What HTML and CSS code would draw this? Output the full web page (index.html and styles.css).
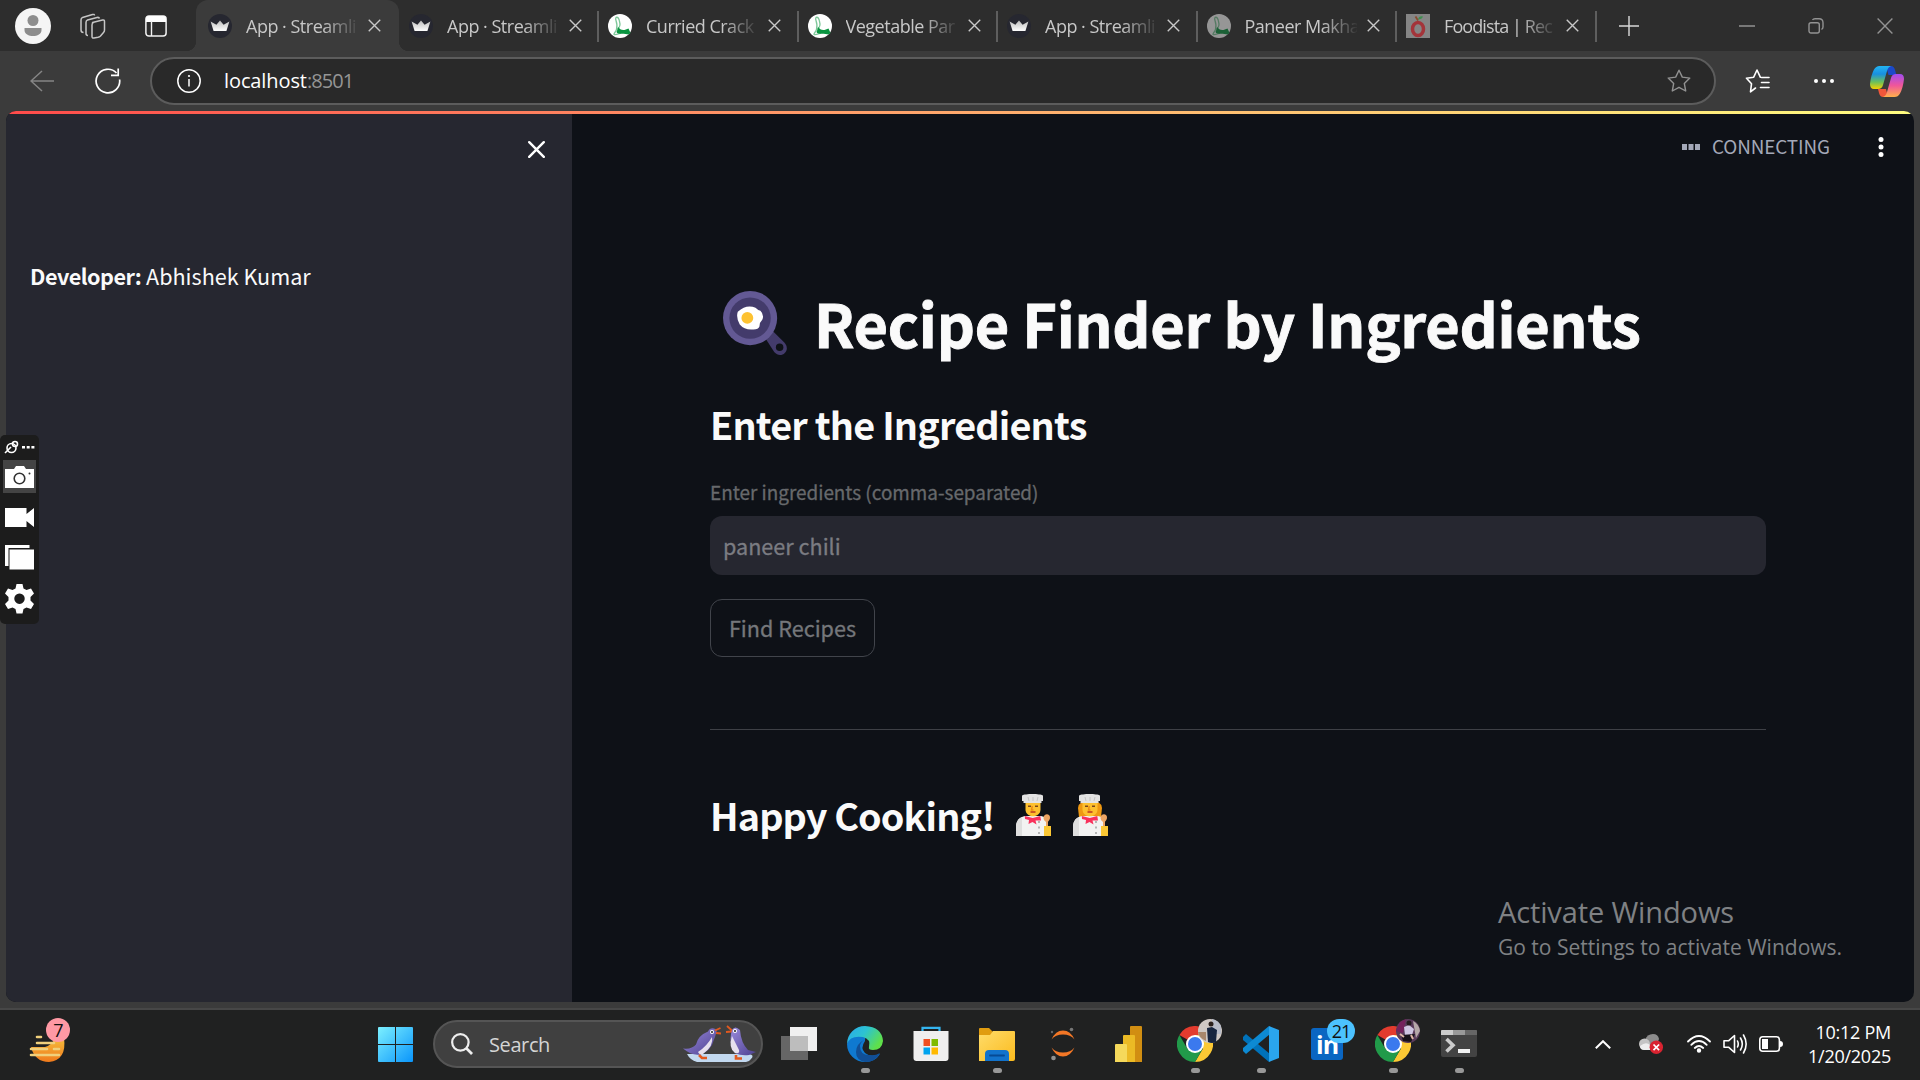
FILE: index.html
```html
<!DOCTYPE html>
<html lang="en">
<head>
<meta charset="utf-8">
<title>App · Streamlit</title>
<link rel="stylesheet" href="styles.css">
</head>
<body>
<svg class="defs" width="0" height="0">
  <defs>
    <linearGradient id="g-crown" x1="0" y1="0" x2="0" y2="1"><stop offset="0" stop-color="#bbb"/><stop offset="1" stop-color="#fff"/></linearGradient>
    <linearGradient id="g-edge1" x1="0" y1="0" x2="1" y2="0.5"><stop offset="0" stop-color="#2aa8ee"/><stop offset=".5" stop-color="#2cc3d2"/><stop offset="1" stop-color="#5fe04a"/></linearGradient>
    <linearGradient id="g-cop1" x1="0" y1="0" x2="0" y2="1"><stop offset="0" stop-color="#23b5f3"/><stop offset=".35" stop-color="#188fe0"/><stop offset=".7" stop-color="#6cc05a"/><stop offset="1" stop-color="#f5d000"/></linearGradient>
    <linearGradient id="g-cop2" x1="0" y1="0" x2="0" y2="1"><stop offset="0" stop-color="#a04cf0"/><stop offset=".5" stop-color="#f0569a"/><stop offset="1" stop-color="#ffb04a"/></linearGradient>
    <linearGradient id="g-win" x1="0" y1="0" x2="1" y2="1"><stop offset="0" stop-color="#7cf0ff"/><stop offset="1" stop-color="#0a95fb"/></linearGradient>
    <linearGradient id="g-folder" x1="0" y1="0" x2="1" y2="1"><stop offset="0" stop-color="#ffdc6a"/><stop offset="1" stop-color="#fbbb1e"/></linearGradient>
    <linearGradient id="g-peng" x1="0" y1="0" x2="1" y2="1"><stop offset="0" stop-color="#9a8add"/><stop offset="1" stop-color="#4d4190"/></linearGradient>
    <linearGradient id="g-sun" x1="0" y1="0" x2="0" y2="1"><stop offset="0" stop-color="#f5bd3c"/><stop offset="1" stop-color="#f07a1c"/></linearGradient>
  </defs>
  <symbol id="i-close" viewBox="0 0 14 14"><path d="M.8.8l12.4 12.4M13.2.8L.8 13.2" fill="none" stroke="currentColor" stroke-width="1.500"/></symbol>
  <symbol id="i-crown" viewBox="0 0 24 24"><circle cx="12" cy="12" r="12" fill="#262730"/><path d="M2.600 7.600l5.800 3.200L12 6.400l3.600 4.400 5.800-3.200-3 9.400H5.600z" fill="url(#g-crown)"/></symbol>
  <symbol id="i-bottle" viewBox="0 0 24 24"><circle cx="12" cy="12" r="12" fill="#fff"/><path d="M9 15.500c3-2 3.500-5 2.500-8-1-6-5-5-3.500-1 1 3 1.500 6 .5 9-1 3-3 4-2.500 5 2 1 5-1 7-1.500" fill="none" stroke="#7fc79a" stroke-width="1.300"/><path d="M10.500 13c1 2 3 3.500 6 3l4-1.500 2 4.500-2 1.500c-3-1-11 .5-12-2.500z" fill="#0a9440"/></symbol>
  <symbol id="i-chrome" viewBox="0 0 36 36"><path d="M18 18L2.400 9A18 18 0 0 1 33.600 9H18z" fill="#e33b2e"/><path d="M18 18V9h15.600A18 18 0 0 1 18 36l8-13.500z" fill="#fcc934"/><path d="M10.200 22.500L2.400 9A18 18 0 0 0 18 36l7.800-13.500z" fill="#219a4a"/><circle cx="18" cy="18" r="9" fill="#fff"/><circle cx="18" cy="18" r="7" fill="#3b79ee"/></symbol>
  <symbol id="i-chef" viewBox="0 0 35 42"><path d="M0 42v-9c0-7 4-10 9-11h16c5 1 7 4 7 8v12z" fill="#f2f2f2"/><path d="M0 42v-9c0-5 2-8 6-10v19z" fill="#dedede"/><path d="M28 32h7v10h-7z" fill="#fbc734"/><path d="M27.500 24c0-5 7-5 6.500 0 0 2-2 3-2 4v4h-2v-4c-1-1-2.500-2-2.500-4z" fill="#eda564"/><path d="M8.800 22l8 2 7.500-2 .7 4.500-5.500 0 1 4-4-2.500-4 2 .5-4-4-1z" fill="#f9315c"/><path d="M9.500 8.500h15v7c0 9-15 9-15 0z" fill="#fdc02f"/><path d="M12 12.200h3M19 12.200h3" stroke="#7a461c" stroke-width="1.500"/><path d="M14.500 18h5" stroke="#b9351f" stroke-width="1.500"/><path d="M16.300 12l-.8 4h2" stroke="#ec8a14" stroke-width="1.400" fill="none"/><path d="M6 1.500c3-2 18-2 21 0v5.500h-1.500v2h-18v-2H6z" fill="#e3e3e3"/><path d="M12 3l1 4M17 3v4M22 3l-1 4" stroke="#c5c5c5" stroke-width="1"/><path d="M22 28h2M22 33.500h2M22 39h2" stroke="#b5b5b5" stroke-width="2"/></symbol>
</svg>

<div class="tabstrip">
  <svg class="avatar" viewBox="0 0 36 36"><circle cx="18" cy="18" r="18" fill="#f5f5f5"/><circle cx="18" cy="12.500" r="5.500" fill="#8d8d8d"/><path d="M9.500 20h17v2c0 8-17 8-17 0z" fill="#8d8d8d"/></svg>
  <svg class="workspaces" viewBox="0 0 26 26" fill="none" stroke="#c6c6c6" stroke-width="1.500" stroke-linejoin="round"><path d="M12.500 9.500l10-2.500q2-.5 2 1.500v8.500q0 1.500-1 2.500l-3 3.500q-1 1-2.500 1.300l-4 .7q-2 .3-2-1.500V12q0-2 1.500-2.500zM8 22.500q-2 0-2-2V9.500q0-2 1.500-2.500l9.500-2.500q2-.5 2.500 1M3.500 19.500q-2.500 0-2.500-2.500V7q0-2 1.500-2.500L12.500 1.500q2-.5 2 1"/></svg>
  <svg class="vtabs" viewBox="0 0 22 22"><rect x=".9" y=".9" width="20.200" height="20.200" rx="3" fill="none" stroke="#f2f2f2" stroke-width="1.500"/><path d="M1 4q0-3 3-3h14q3 0 3 3v3H1z" fill="#fff"/><path d="M6.500 6v15" stroke="#f2f2f2" stroke-width="1.400"/></svg>
  <div class="tabs">
    <div class="tab active"><svg class="fav"><use href="#i-crown"/></svg><span class="tt">App · Streamli</span><svg class="x"><use href="#i-close"/></svg></div>
    <div class="tab sep"><svg class="fav"><use href="#i-crown"/></svg><span class="tt">App · Streamli</span><svg class="x"><use href="#i-close"/></svg></div>
    <div class="tab sep"><svg class="fav"><use href="#i-bottle"/></svg><span class="tt">Curried Crack</span><svg class="x"><use href="#i-close"/></svg></div>
    <div class="tab sep"><svg class="fav"><use href="#i-bottle"/></svg><span class="tt">Vegetable Par</span><svg class="x"><use href="#i-close"/></svg></div>
    <div class="tab sep"><svg class="fav"><use href="#i-crown"/></svg><span class="tt">App · Streamli</span><svg class="x"><use href="#i-close"/></svg></div>
    <div class="tab sep"><svg class="fav dim"><use href="#i-bottle"/></svg><span class="tt">Paneer Makha</span><svg class="x"><use href="#i-close"/></svg></div>
    <div class="tab sep"><svg class="fav" viewBox="0 0 24 24"><path d="M0 0h24v24H0z" fill="#858585"/><ellipse cx="12" cy="15" rx="5.500" ry="6.500" fill="none" stroke="#a3343a" stroke-width="3.500"/><path d="M12 6.500L9.500 2.500" stroke="#8a4a2a" stroke-width="1.800"/><path d="M12 5.500q1-4 5-3-1 3-5 3z" fill="#3f8f4f"/></svg><span class="tt tight">Foodista | Rec</span><svg class="x"><use href="#i-close"/></svg></div>
  </div>
  <svg class="plus" viewBox="0 0 21 21"><path d="M10.500 0v21M0 10.500h21" stroke="#d8d8d8" stroke-width="1.500"/></svg>
  <div class="winctl">
    <svg viewBox="0 0 16 16"><path d="M0 8h16" stroke="#929292" stroke-width="1.500"/></svg>
    <svg viewBox="0 0 16 16" fill="none" stroke="#929292" stroke-width="1.400"><rect x="1" y="4.700" width="10.300" height="10.300" rx="2"/><path d="M4.500 2q.7-1.200 2.500-1.200h4q4 0 4 4V9q0 1.700-1.500 2.500"/></svg>
    <svg viewBox="0 0 16 16"><path d="M.6.6l14.800 14.800M15.400.6L.6 15.400" stroke="#929292" stroke-width="1.400"/></svg>
  </div>
</div>

<div class="toolbar">
  <svg class="back" viewBox="0 0 24 22" fill="none" stroke="#858585" stroke-width="1.500"><path d="M24 11H1M12 1L1 11l11 10"/></svg>
  <svg class="reload" viewBox="0 0 26 26" fill="none" stroke="#fff" stroke-width="1.700"><path d="M24.600 11.500A11.800 11.800 0 1 1 21.500 5M16 7.300h7.200V.5"/></svg>
  <div class="omnibox">
    <svg class="info" viewBox="0 0 24 24"><circle cx="12" cy="12" r="11.200" fill="none" stroke="#fff" stroke-width="1.500"/><circle cx="12" cy="7" r="1.100" fill="#fff"/><path d="M12 10v7.500" stroke="#fff" stroke-width="1.500"/></svg>
    <span class="url">localhost<span class="port">:8501</span></span>
    <svg class="star" viewBox="0 0 24 24"><path d="M12 1.200l3.300 6.900 7.500 1-5.500 5.300 1.400 7.600L12 18.300 5.300 22l1.400-7.600L1.200 9.100l7.500-1z" fill="none" stroke="#929292" stroke-width="1.400" stroke-linejoin="round"/></svg>
  </div>
  <svg class="favs" viewBox="0 0 24 24" fill="none" stroke="#fff" stroke-width="1.600" stroke-linejoin="round" stroke-linecap="round"><path d="M10 19l-5 3.800 1-8L1 9.200l7.200-1L11.500 1l3.300 7.200M16 8.500h7.500M16 13.500h7.500M15 18.500h8.500"/></svg>
  <svg class="more" viewBox="0 0 20 4" fill="#fff"><circle cx="2" cy="2" r="2"/><circle cx="10" cy="2" r="2"/><circle cx="18" cy="2" r="2"/></svg>
  <svg class="copilot" viewBox="0 0 34 31"><path d="M16 0h5q3 0 4 4l1.500 5h-8z" fill="#1b49c9"/><path d="M8 23h8l2 8h-5q-3 0-4-4z" fill="#f0563a"/><path d="M9.500 0H21q-3 1-4 5l-4 14q-1 4-5 4H4q-4 0-4-5Q1 9 4 3.500 6 0 9.500 0z" fill="url(#g-cop1)"/><path d="M24.500 31H13q3-1 4-5l4-14q1-4 5-4h4q4 0 4 5-1 9-4 14.500-2 3.500-5.500 3.500z" fill="url(#g-cop2)"/></svg>
</div>

<div class="viewport">
  <aside class="sidebar">
    <svg class="sclose" viewBox="0 0 17 17"><path d="M1.200 1.200l14.600 14.600M15.800 1.200L1.200 15.800" stroke="#fff" stroke-width="2.400" stroke-linecap="round"/></svg>
    <p class="dev"><b>Developer:</b> Abhishek Kumar</p>
  </aside>
  <main class="main">
    <header class="status"><svg class="sdots" viewBox="0 0 18 6" fill="#a3a8b8"><path d="M0 0h5v6H0zM6.500 0h5v6h-5zM13 0h5v6h-5z"/></svg><span class="conn">CONNECTING</span><svg class="kebab" viewBox="0 0 6 20" fill="#fff"><circle cx="3" cy="2.500" r="2.500"/><circle cx="3" cy="10" r="2.500"/><circle cx="3" cy="17.500" r="2.500"/></svg></header>
    <div class="content">
      <h1><svg class="pan" viewBox="0 0 66 66"><path d="M43 48l8-7 11 11c8 8-3 18-10 10z" fill="#433b6b"/><circle cx="57.500" cy="57" r="3.800" fill="#0e1117"/><circle cx="27.500" cy="27.500" r="27.500" fill="#635994"/><circle cx="27.500" cy="27.500" r="21" fill="#433b6b"/><path d="M15 21q9-8 18-4 3 3 5 3 4 4 2 9-3 3-3 7-1 3-6 3-9 1-14-5-4-7-2-13z" fill="#fff"/><circle cx="24.700" cy="27.300" r="6" fill="#fdc231"/></svg>Recipe Finder by Ingredients</h1>
      <h3>Enter the Ingredients</h3>
      <label class="lab">Enter ingredients (comma-separated)</label>
      <div class="input">paneer chili</div>
      <div class="btn">Find Recipes</div>
      <hr>
      <h3 class="happy">Happy Cooking!<svg class="chef"><use href="#i-chef"/></svg><svg class="chef" viewBox="0 0 35 42"><path d="M5 14q0-7 12-7t12 7l-1 9H6z" fill="#ee9812"/><use href="#i-chef" width="35" height="42"/></svg></h3>
    </div>
  </main>
</div>

<footer class="taskbar">
  <div class="weather"><svg viewBox="0 0 40 30"><path d="M3 12h14q6-1 10-9h9q3 22-15 24Q7 27 3 12z" fill="url(#g-sun)"/><path d="M9 2h4M9 8h17M3 14h16M26 14h5M3 20h28" stroke="#f0d07c" stroke-width="2.600" stroke-linecap="round"/></svg><span class="badge pink">7</span></div>
  <svg class="start" viewBox="0 0 35 35"><path d="M0 1q0-1 1-1h16v17H0zM18 0h16q1 0 1 1v16H18zM0 18h17v17H1q-1 0-1-1zM18 18h17v16q0 1-1 1H18z" fill="url(#g-win)"/></svg>
  <div class="search"><svg class="mag" viewBox="0 0 23 23" fill="none" stroke="#eee" stroke-width="2.300"><circle cx="9.800" cy="9.800" r="8.600"/><path d="M16 16l6 6" stroke-width="2.800"/></svg><span class="sl">Search</span>
    <svg class="penguins" viewBox="0 0 73 38"><path d="M4 29h62q6 1 2 5-2 3-5 3H14q-7-2-10-8z" fill="#c3d9f0"/><path d="M0 23.500q9 1 13-4 2-9 12-13 2-4 6-3 4 1 2 5-1 4-2 6-3 12-14 15Q9 31 0 23.500z" fill="url(#g-peng)"/><path d="M29 12q2 9-9 17-4 1-5-2 9-6 14-15z" fill="#e6e0ee"/><path d="M32 5.500l5.500-2.500M33 8l5 .5M44 1l5.500 5M43 7l6-.5" stroke="#e2591f" stroke-width="1.800"/><path d="M16 30l3 3h5M53 30v3.500h6" stroke="#e2591f" stroke-width="2.600" fill="none"/><path d="M49 5q3-5 8 0 1 13 8 20l8 2-7 3q-8 1-14-2-6-9-4-19z" fill="url(#g-peng)"/><path d="M49 11q-4 12 3 17 5 1 4-3z" fill="#e6e0ee"/><circle cx="29" cy="7" r="2" fill="#fff"/><circle cx="29" cy="7" r="1" fill="#222"/><circle cx="52" cy="6" r="2" fill="#fff"/><circle cx="52" cy="6" r="1" fill="#222"/></svg></div>
  <div class="apps">
    <div class="app"><svg viewBox="0 0 36 36"><path d="M9 1h27v24H9z" fill="#f0f0f0"/><path d="M0 10h27v24H0z" fill="#6e6e6e" fill-opacity=".9"/><path d="M9 10h18v15H9z" fill="#bdbdbd"/></svg></div>
    <div class="app run"><svg viewBox="0 0 36 36"><path d="M0 18A18 18 0 0 0 18 36q10 0 15-8-9 4-15-1-5-5 0-12 1-8-7-8Q3 8 0 18z" fill="#0f79d0"/><path d="M13 20q0 9 9 9 6 1 11-2-4 9-15 9-9-2-9-10 0-8 8-12-4 3-4 6z" fill="#114f96"/><path d="M0 18A18 18 0 0 1 18 0q17 1 18 15-1 9-10 9-5 0-4-3 2-8-6-10Q3 9 0 18z" fill="url(#g-edge1)"/></svg></div>
    <div class="app"><svg viewBox="0 0 36 36"><path d="M9.500 7V1.800h17V7" fill="none" stroke="#34b5f0" stroke-width="2.200"/><path d="M.5 5h35v27q0 3-3 3h-29q-3 0-3-3z" fill="#efefef"/><path d="M10.500 13H17v7h-6.500z" fill="#f05022"/><path d="M18.500 13H25v7h-6.500z" fill="#7fba00"/><path d="M10.500 21.500H17v7h-6.500z" fill="#00a4ef"/><path d="M18.500 21.500H25v7h-6.500z" fill="#ffb900"/></svg></div>
    <div class="app run"><svg viewBox="0 0 36 36"><path d="M0 3q0-1 1-1h9l4 4-2 4H0z" fill="#e09c10"/><path d="M0 9h11l3-4h21q1 0 1 1v27q0 2-2 2H0z" fill="url(#g-folder)"/><path d="M6 35v-7q0-4 4-4h16q4 0 4 4v7z" fill="#1273cc"/><path d="M11 29.500h14" stroke="#064a94" stroke-width="1.800" stroke-linecap="round"/></svg></div>
    <div class="app"><svg viewBox="0 0 36 36"><path d="M6.500 13.500q4-9 11.500-9t11.500 9q-4-5-11.500-5t-11.500 5zM6.500 21.500q4 5 11.500 5t11.500-5q-4 9-11.500 9t-11.500-9z" fill="#f37726"/><circle cx="8.500" cy="32" r="2.300" fill="#919191"/><circle cx="26.500" cy="3.500" r="1.800" fill="#777"/><circle cx="7" cy="6" r="1.200" fill="#666"/></svg></div>
    <div class="app"><svg viewBox="0 0 36 36"><path d="M19 1q0-1 1-1h10q1 0 1 1v35H19z" fill="#d18e12"/><path d="M12 10q0-1 1-1h10q1 0 1 1v26H12z" fill="#ebba25"/><path d="M4 19q0-1 1-1h10q1 0 1 1v17H4z" fill="#f5d95b"/></svg></div>
    <div class="app run"><svg><use href="#i-chrome"/></svg><svg class="pic" viewBox="0 0 24 24"><circle cx="12" cy="12" r="12" fill="#cfc8c4"/><path d="M14 0q6 1 9 7v8H14z" fill="#b8bcc8"/><path d="M0 13h8v9Q1 19 0 13z" fill="#a8876c"/><path d="M9 9l5-1 5 3-1 12q-4 2-8 0z" fill="#17253f"/><circle cx="13" cy="5" r="2.500" fill="#2a201c"/></svg></div>
    <div class="app run"><svg viewBox="0 0 36 36"><path d="M0 11l3-3 24 20-1 8L0 14z" fill="#0072ba"/><path d="M0 25l3 3 24-20-1-8L0 22z" fill="#0d8ad3"/><path d="M26 0l10 4v28l-10 4z" fill="#2aa5ee"/></svg></div>
    <div class="app"><svg viewBox="0 0 36 36"><rect x="2" y="2" width="32" height="32" rx="3" fill="#0a66c2"/></svg><b class="in">in</b><span class="badge blue">21</span></div>
    <div class="app run"><svg><use href="#i-chrome"/></svg><svg class="pic" viewBox="0 0 24 24"><circle cx="12" cy="12" r="12" fill="#5a3b5b"/><path d="M0 12l4-9 6-3-3 14z" fill="#74215d"/><path d="M17 2q6 3 7 10l-4 7z" fill="#b5a8a8"/><path d="M8 8l5-2 5 4-2 6H9z" fill="#cfc5e2"/><circle cx="13" cy="4" r="2.500" fill="#241a1e"/><path d="M5 16l14-1-4 8-8-1z" fill="#171219"/><path d="M4 15l4 3M15 16l2 4" stroke="#e0b7a8" stroke-width="2"/></svg></div>
    <div class="app run"><svg viewBox="0 0 36 36"><path d="M0 5q0-1 1-1h34q1 0 1 1v24q0 2-2 2H2q-2 0-2-2z" fill="#434343"/><path d="M0 9V5q0-1 1-1h11v5z" fill="#ccc"/><path d="M12 4h12v5H12z" fill="#999"/><path d="M24 4h11q1 0 1 1v4H24z" fill="#666"/><path d="M5.500 13l6.500 6.200-6.500 6.300" fill="none" stroke="#ccc" stroke-width="3.600"/><path d="M17 23h12v4H17z" fill="#f2f2f2"/></svg></div>
  </div>
  <div class="tray">
    <svg class="chev" viewBox="0 0 16 9"><path d="M.8 8.200L8 1.200l7.200 7" fill="none" stroke="#fff" stroke-width="2"/></svg>
    <svg class="cloud" viewBox="0 0 24 20"><path d="M6 6q2-6 8-6 5 0 6 5l-4 10H8z" fill="#8c8c8c"/><circle cx="5.500" cy="10" r="5.500" fill="#c4c4c4"/><path d="M1 12q6-5 10-1v5H5q-4 0-4-4z" fill="#eee"/><circle cx="17.300" cy="13.300" r="6.700" fill="#d92330"/><path d="M14.500 10.500l5.600 5.600M20.100 10.500l-5.600 5.600" stroke="#fff" stroke-width="1.700"/></svg>
    <svg class="wifi" viewBox="0 0 24 18" fill="none" stroke="#fff" stroke-width="1.800" stroke-linecap="round"><path d="M1 6.500q11-11 22 0M4.300 9.800q7.700-7.500 15.400 0M7.800 13q4.200-4 8.400 0"/><circle cx="12" cy="15.500" r="1.300" fill="#fff"/></svg>
    <svg class="vol" viewBox="0 0 24 20" fill="none" stroke="#fff" stroke-width="1.600" stroke-linejoin="round" stroke-linecap="round"><path d="M1 6.800h4.500L11.500 1.500v17L5.500 13.200H1zM14.500 7q1.500 3 0 6M17.500 4q3.600 6 0 12M20.500 1q5.300 9 0 18"/></svg>
    <svg class="bat" viewBox="0 0 24 16"><rect x=".8" y=".8" width="19.600" height="14.400" rx="3" fill="none" stroke="#fff" stroke-width="1.600"/><path d="M3 3h6v10H3zM21 5q3 0 3 3t-3 3z" fill="#fff"/></svg>
    <div class="clock">10:12 PM<br>1/20/2025</div>
  </div>
</footer>

<div class="activate"><div class="a1">Activate Windows</div><div class="a2">Go to Settings to activate Windows.</div></div>

<div class="recorder">
  <svg viewBox="0 0 40 190" fill="#fff"><g fill="none" stroke="#fff" stroke-width="1.600"><ellipse cx="11.500" cy="13" rx="4.500" ry="4.500"/><circle cx="15" cy="9" r="2.500"/><path d="M5 18l6-6"/></g><path d="M22 11h3v2.500h-3zM26.700 11h3v2.500h-3zM31.400 11h3v2.500h-3z"/><path d="M3 25h33v33H3z" fill="#444"/><path d="M5 34h9l2-3h8l2 3h8v19H5z"/><circle cx="19.500" cy="43.500" r="5.300" fill="none" stroke="#333" stroke-width="1.600"/><circle cx="29.500" cy="38.500" r="1" fill="#333"/><path d="M5 73h21.500v6l7.500-6v19l-7.500-6v6H5z"/><path d="M5 110h24.500v3H8.500v18H5z"/><path d="M9.500 114.500H34v20H9.500z"/><path fill-rule="evenodd" d="M16.500 149h6l1 4.500 3 1.500 4.500-1.500 3 5-3.500 3.500v3.500l3.500 3.500-3 5-4.500-1.500-3 1.500-1 4.500h-6l-1-4.500-3-1.500-4.500 1.500-3-5 3.500-3.500V162L5 158.500l3-5 4.500 1.500 3-1.500zM19.500 158.500a5.200 5.200 0 1 0 .01 0z"/></svg>
</div>
</body>
</html>
```
FILE: styles.css
```css
* { box-sizing: border-box; margin: 0; padding: 0; }
svg { display: block; flex: none; }
.defs { position: absolute; }
body { width: 1920px; height: 1080px; overflow: hidden; background: #3b3b3b; font-family: "Open Sans", "Noto Sans", sans-serif; display: flex; flex-direction: column; position: relative; }

/* tab strip */
.tabstrip { height: 51px; background: #2d2d2d; display: flex; align-items: center; padding-left: 15px; flex: none; }
.avatar { width: 36px; height: 36px; }
.workspaces { width: 26px; height: 26px; margin-left: 29px; }
.vtabs { width: 22px; height: 22px; margin-left: 39px; }
.tabs { display: flex; align-self: stretch; margin-left: 29px; }
.tab { width: 199.500px; height: 51px; display: flex; align-items: center; padding-left: 9px; color: #c8c8c8; position: relative; }
.tab.active { background: #3b3b3b; width: 203px; padding-left: 12px; border-radius: 12px 12px 0 0; }
.tab.active + .tab { width: 200px; padding-left: 10px; }
.tab.active::before, .tab.active::after { content: ""; position: absolute; bottom: 0; width: 10px; height: 10px; }
.tab.active::before { left: -10px; background: radial-gradient(circle at 0 0, #2d2d2d 10px, #3b3b3b 10.500px); }
.tab.active::after { right: -10px; background: radial-gradient(circle at 100% 0, #2d2d2d 10px, #3b3b3b 10.500px); }
.tab.sep::after { content: ""; position: absolute; right: 0; top: 11px; width: 2px; height: 31px; background: #5e5e5e; }
.fav { width: 24px; height: 24px; }
.fav.dim { opacity: .5; }
.tt { width: 112px; margin-left: 14px; white-space: nowrap; font-size: 18px; line-height: 28px; letter-spacing: -0.5px; -webkit-mask-image: linear-gradient(90deg, #000 76px, transparent 114px); mask-image: linear-gradient(90deg, #000 76px, transparent 114px); }
.tt.tight { letter-spacing: -0.9px; }
.x { width: 13px; height: 13px; margin-left: 10px; }
.plus { width: 20px; height: 20px; margin-left: 22px; }
.winctl { display: flex; gap: 53px; margin-left: auto; padding-right: 27px; }
.winctl svg { width: 16px; height: 16px; }

/* toolbar */
.toolbar { height: 60px; display: flex; align-items: center; padding-left: 30px; flex: none; }
.back { width: 24px; height: 22px; }
.reload { width: 26px; height: 26px; margin-left: 41px; }
.omnibox { width: 1566px; height: 48px; margin-left: 29px; border: 2px solid #5c5c5c; border-radius: 24px; background: #292929; display: flex; align-items: center; padding: 0 23px 0 25px; }
.info { width: 24px; height: 24px; }
.url { flex: 1; margin-left: 23px; font-size: 20px; color: #fff; line-height: 30px; letter-spacing: -0.1px; }
.port { color: #959595; letter-spacing: -0.9px; }
.star { width: 24px; height: 24px; }
.favs { width: 25px; height: 24px; margin-left: 29px; }
.more { width: 20px; height: 4px; margin-left: 44px; }
.copilot { width: 34px; height: 31px; margin-left: 36px; }

/* page */
.viewport { width: 1908px; height: 891px; margin: 0 6px; border-radius: 10px; overflow: hidden; background: #0e1117; display: flex; flex: none; position: relative; font-family: "Noto Sans CJK SC", "Noto Sans CJK JP", sans-serif; color: #fafafa; }
.viewport::before { content: ""; position: absolute; left: 0; right: 0; top: 0; height: 3px; background: linear-gradient(90deg, #ff4b4b, #ffa06a 45%, #fffd80); }
.sidebar { width: 566px; background: #262730; padding: 30px 0 0 24px; }
.sclose { width: 17px; height: 17px; margin-left: 498px; }
.dev { margin-top: 100px; font-size: 21.600px; line-height: 36px; white-space: pre; }
.dev b { letter-spacing: -0.5px; }
.main { flex: 1; }
.status { display: flex; align-items: center; height: 72px; padding-right: 30px; justify-content: flex-end; }
.sdots { width: 18px; height: 6px; }
.conn { font-size: 18.900px; line-height: 28px; color: #a3a8b8; margin: -2px 48px 0 12px; letter-spacing: -0.1px; }
.kebab { width: 6px; height: 20px; }
.content { width: 1056px; margin-left: 138px; padding-top: 99px; }
h1 { font-size: 59.400px; line-height: 80px; font-weight: 700; display: flex; align-items: center; white-space: nowrap; letter-spacing: -0.250px; -webkit-text-stroke: 0.900px #fafafa; }
.pan { width: 65px; height: 65px; margin: 2px 26px 0 13px; }
h3 { font-size: 37.800px; line-height: 50px; font-weight: 600; margin-top: 37px; letter-spacing: -0.820px; }
.lab { display: block; margin-top: 28px; font-size: 18.900px; line-height: 30px; color: #67696c; -webkit-text-stroke: 0.300px #67696c; }
.input { margin-top: 9px; height: 59px; border-radius: 12px; background: #262730; padding-left: 13px; font-size: 21.600px; line-height: 59px; color: #7b7c82; -webkit-text-stroke: 0.300px #7b7c82; }
.btn { width: 165px; height: 58px; margin-top: 24px; border: 1px solid #41444b; border-radius: 12px; font-size: 21.600px; line-height: 56px; text-align: center; color: #75777b; -webkit-text-stroke: 0.300px #75777b; }
hr { border: 0; height: 1px; background: #3e4046; margin-top: 72px; }
.happy { display: flex; align-items: center; margin-top: 60px; letter-spacing: -0.900px; }
.chef { width: 35px; height: 42px; margin-left: 22px; }

/* taskbar */
.taskbar { margin-top: 6px; height: 72px; border-top: 2px solid #474747; background: #202121; display: flex; align-items: center; position: relative; padding: 0 0 2px 28px; }
.weather { width: 40px; height: 52px; position: relative; padding-top: 17px; }
.weather svg { width: 40px; height: 30px; }
.badge { position: absolute; height: 24px; border-radius: 12px; font-size: 18px; line-height: 24px; text-align: center; color: #111; letter-spacing: -1px; }
.badge.pink { left: 18px; top: 0; width: 24px; background: #ff99a4; }
.badge.blue { left: 33px; top: -7px; width: 28px; background: #4cc2ff; }
.start { width: 35px; height: 35px; margin-left: 310px; }
.search { width: 330px; height: 48px; margin-left: 20px; border-radius: 24px; background: #404040; border: 2px solid #555; display: flex; align-items: center; padding: 0 5px 0 16px; font-size: 20px; color: #d5d5d5; }
.mag { width: 22px; height: 22px; margin-right: 16px; }
.sl { letter-spacing: -0.4px; }
.penguins { width: 73px; height: 38px; margin-left: auto; }
.apps { display: flex; margin-left: 3px; }
.app { width: 66px; height: 36px; padding-left: 15px; position: relative; }
.app > svg { width: 36px; height: 36px; }
.app.run::after { content: ""; position: absolute; left: 29px; top: 42px; width: 9px; height: 5px; border-radius: 3px; background: #989898; }
.app > .pic { position: absolute; left: 36px; top: -7px; width: 24px; height: 24px; }
.in { position: absolute; left: 22px; top: 5px; font-size: 25px; line-height: 26px; color: #fff; letter-spacing: -1px; }
.tray { display: flex; align-items: center; margin-left: auto; padding-right: 29px; }
.chev { width: 16px; height: 9px; }
.cloud { width: 24px; height: 20px; margin-left: 28px; }
.wifi { width: 24px; height: 18px; margin-left: 24px; }
.vol { width: 24px; height: 20px; margin-left: 12px; }
.bat { width: 24px; height: 16px; margin-left: 12px; }
.clock { width: 108px; text-align: right; font-size: 18px; line-height: 24px; color: #fff; letter-spacing: -0.250px; margin-top: -1px; }

.activate { position: absolute; left: 1498px; top: 892px; color: #7f8184; white-space: nowrap; }
.a1 { font-size: 29px; line-height: 40px; letter-spacing: -0.130px; }
.a2 { font-size: 21px; line-height: 30px; }
.recorder { position: absolute; left: 0; top: 435px; width: 39px; height: 189px; border-radius: 5px; background: #1c1c1c; overflow: hidden; }
.recorder svg { width: 40px; height: 190px; }
```
